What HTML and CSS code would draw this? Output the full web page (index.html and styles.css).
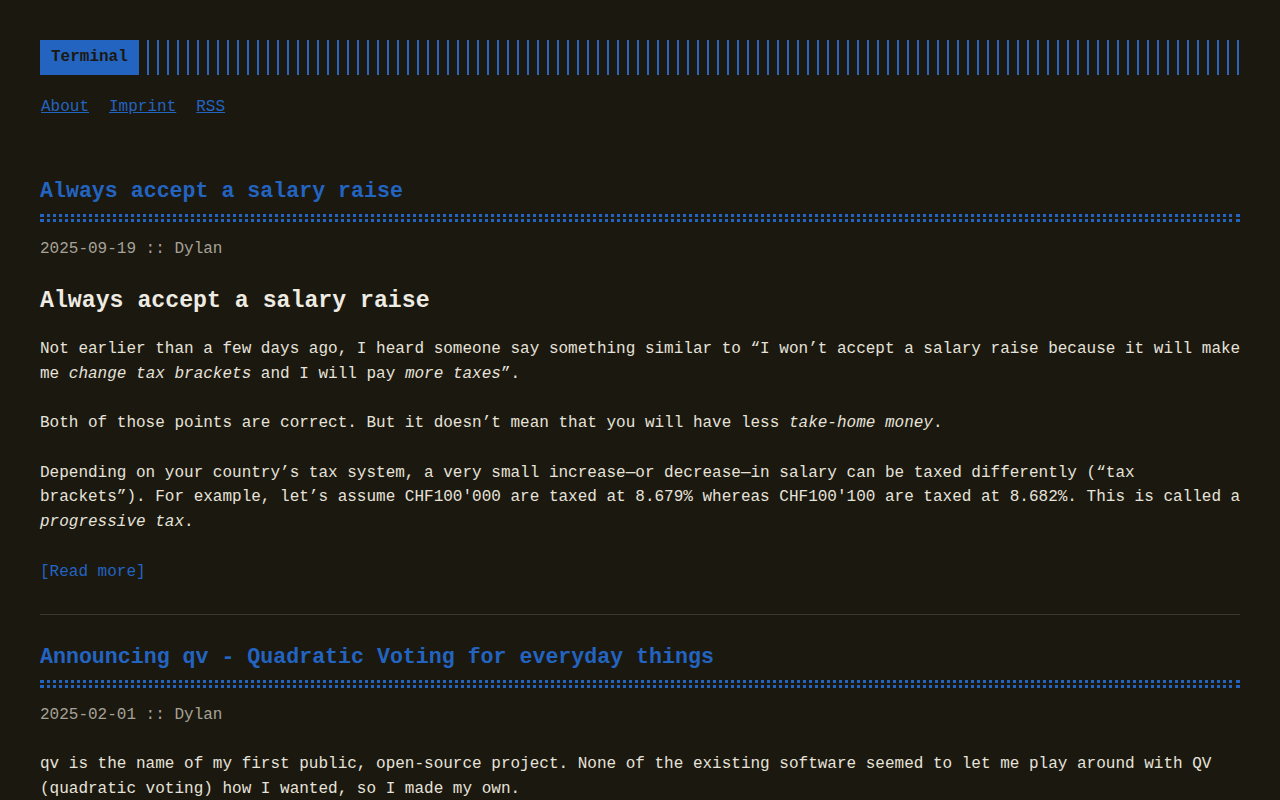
FILE: index.html
```html
<!DOCTYPE html>
<html>
<head>
    <title>Dylan's blog</title>
    <link rel="stylesheet" href="styles.css">
</head>
<body>

<div class="container">
    <header class="header">
        <div class="header-logo">
            <a href="#" class="logo">Terminal</a>
            <span class="logo-stripes"></span>
        </div>
        <nav class="menu">
            <a href="#">About</a>
            <a href="#">Imprint</a>
            <a href="#">RSS</a>
        </nav>
    </header>

    <main class="posts">
        <article class="post">
            <h1 class="post-title"><a href="#">Always accept a salary raise</a></h1>
            <div class="post-meta">2025-09-19 :: Dylan</div>
            <div class="post-content">
                <h2>Always accept a salary raise</h2>
                <p>Not earlier than a few days ago, I heard someone say something similar to “I won’t accept a salary raise because it will make me <em>change tax brackets</em> and I will pay <em>more taxes</em>”.</p>
                <p>Both of those points are correct. But it doesn’t mean that you will have less <em>take-home money</em>.</p>
                <p>Depending on your country’s tax system, a very small increase—or decrease—in salary can be taxed differently (“tax brackets”). For example, let’s assume CHF100'000 are taxed at 8.679% whereas CHF100'100 are taxed at 8.682%. This is called a <em>progressive tax</em>.</p>
            </div>
            <div class="read-more"><a href="#">[Read more]</a></div>
        </article>

        <article class="post">
            <h1 class="post-title"><a href="#">Announcing qv - Quadratic Voting for everyday things</a></h1>
            <div class="post-meta">2025-02-01 :: Dylan</div>
            <div class="post-content">
                <p>qv is the name of my first public, open-source project. None of the existing software seemed to let me play around with QV (quadratic voting) how I wanted, so I made my own.</p>
            </div>
            <div class="read-more"><a href="#">[Read more]</a></div>
        </article>
    </main>
</div>

</body>
</html>
```

FILE: styles.css
```css
html, body {
    margin: 0;
    padding: 0;
    background-color: #1b1810;
    color: #e6e3da;
    font-family: "Liberation Mono", "DejaVu Sans Mono", monospace;
    font-size: 16px;
    line-height: 1.54;
}

a {
    color: #2364c1;
}

.container {
    padding: 40px;
    max-width: 1200px;
}

/* header */
.header-logo {
    display: flex;
    align-items: stretch;
    gap: 8px;
}

.logo {
    display: block;
    padding: 5px 11px;
    background-color: #2364c1;
    color: #1b1810;
    font-weight: bold;
    text-decoration: none;
}

.logo-stripes {
    flex: 1;
    background: repeating-linear-gradient(90deg, #2a66bd, #2a66bd 2px, transparent 0, transparent 10px);
}

.menu {
    display: flex;
    gap: 20px;
    margin: 20px 1px;
}

/* posts */
.posts {
    margin-top: 31px;
}

.post {
    padding: 26px 0 30px;
    border-bottom: 1px solid #3b382f;
}

.post:first-child {
    padding-top: 25px;
}

.post-title {
    position: relative;
    margin: 0 0 15px;
    padding-bottom: 11px;
    font-size: 21.6px;
    line-height: 33px;
    font-weight: bold;
    border-bottom: 3px dotted #2364c1;
}

.post-title a {
    text-decoration: none;
}

.post-title::after {
    content: "";
    position: absolute;
    left: 0;
    bottom: 2px;
    width: 100%;
    border-bottom: 3px dotted #2364c1;
}

.post-meta {
    color: #a6a297;
}

/* a little slack on the right so full-width lines wrap as in the original */
.post-content {
    margin-top: 24px;
    margin-right: -4px;
}

.post-content h2 {
    margin: 0 0 21px;
    font-size: 23.2px;
    line-height: 30px;
    font-weight: bold;
    color: #eeebe3;
}

.post-content p {
    margin: 0 0 25px;
}

.read-more a {
    text-decoration: none;
}
```
